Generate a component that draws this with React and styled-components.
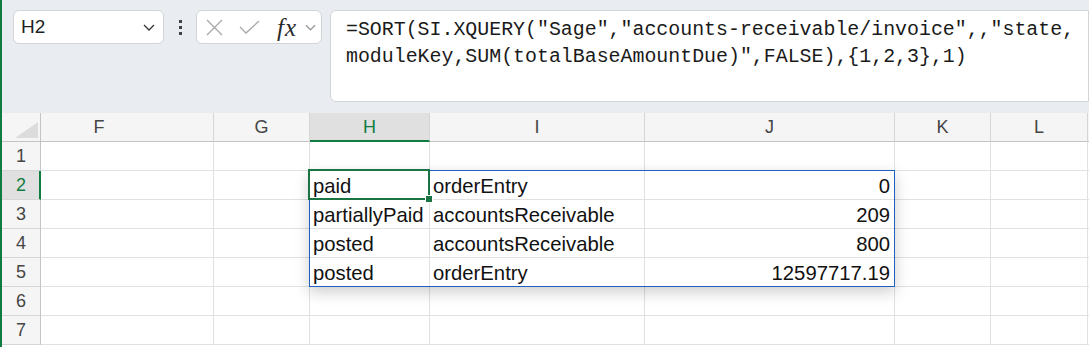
import styled, { createGlobalStyle } from "styled-components";

const GlobalStyle = createGlobalStyle`
  html, body {
    margin: 0;
    padding: 0;
    background: #fff;
    overflow: hidden;
  }
`;

const Frame = styled.div`
  width: 1089px;
  height: 347px;
  box-sizing: border-box;
  border-left: 2px solid #107c41;
  overflow: hidden;
  font-family: "Liberation Sans", Arial, sans-serif;
`;

const Toolbar = styled.div`
  height: 113px;
  box-sizing: border-box;
  background: #e9ecf0;
  display: flex;
  align-items: flex-start;
  padding: 10px 0 0 11px;
`;

const NameBox = styled.div`
  width: 151px;
  height: 34px;
  box-sizing: border-box;
  background: #fff;
  border: 1px solid #d2d4d7;
  border-radius: 6px;
  display: flex;
  align-items: center;
  justify-content: space-between;
  padding: 0 8px 0 7px;
  font-size: 19px;
  color: #1f1f1f;
`;

const Dots = styled.div`
  width: 32px;
  height: 34px;
  display: flex;
  flex-direction: column;
  align-items: center;
  justify-content: center;
  gap: 3px;

  span {
    width: 3px;
    height: 3px;
    background: #424242;
  }
`;

const FxBox = styled.div`
  width: 126px;
  height: 34px;
  box-sizing: border-box;
  background: #fff;
  border: 1px solid #d2d4d7;
  border-radius: 6px;
  display: flex;
  align-items: center;
  padding: 0 0 0 9px;
`;

const FxLabel = styled.span`
  font-family: "Liberation Serif", "Times New Roman", serif;
  font-style: italic;
  font-size: 25px;
  line-height: 25px;
  color: #2b2b2b;
  margin: 0 8px 0 17px;
  letter-spacing: 1px;
`;

const FormulaBar = styled.div`
  flex: 1;
  height: 92px;
  margin-left: 8px;
  box-sizing: border-box;
  background: #fff;
  border: 1px solid #d2d4d7;
  border-radius: 6px 0 0 6px;
  padding: 5px 0 0 15px;
  font-family: "Liberation Mono", "Courier New", monospace;
  font-size: 19.9px;
  line-height: 27px;
  color: #1a1a1a;
  white-space: pre;
`;

const Sheet = styled.div`
  position: relative;
  display: grid;
  grid-template-columns: 39px 173px 96px 120px 215px 250px 96px 97px 1fr;
  grid-auto-rows: 29px;
`;

const Corner = styled.div`
  background: #f5f5f5;
  border-right: 1px solid #c4c4c4;
  border-bottom: 1px solid #c4c4c4;
  display: flex;
  align-items: flex-end;
  justify-content: flex-end;
  padding: 0 2px 3px 0;
`;

const ColHead = styled.div`
  background: ${(p) => (p.$active ? "#e0e0e0" : "#f5f5f5")};
  color: ${(p) => (p.$active ? "#107c41" : "#454545")};
  border-right: 1px solid #d6d6d6;
  border-bottom: ${(p) => (p.$active ? "2px solid #107c41" : "1px solid #c4c4c4")};
  display: flex;
  align-items: center;
  justify-content: center;
  padding-right: ${(p) => p.$shift || 0}px;
  padding-top: ${(p) => (p.$active ? 1 : 0)}px;
  font-size: 18px;
`;

const RowHead = styled.div`
  background: ${(p) => (p.$active ? "#e0e0e0" : "#f5f5f5")};
  color: ${(p) => (p.$active ? "#107c41" : "#454545")};
  border-right: ${(p) => (p.$active ? "2px solid #107c41" : "1px solid #c4c4c4")};
  border-bottom: 1px solid #d6d6d6;
  display: flex;
  align-items: center;
  justify-content: center;
  padding-left: ${(p) => (p.$active ? 1 : 0)}px;
  font-size: 18px;
`;

const Cell = styled.div`
  border-right: 1px solid #e1e1e1;
  border-bottom: 1px solid #e1e1e1;
  display: flex;
  align-items: flex-end;
  justify-content: ${(p) => (p.$right ? "flex-end" : "flex-start")};
  padding: 0 4px 3px 3px;
  font-size: 20.3px;
  line-height: 20px;
  color: #111;
  white-space: nowrap;
  overflow: hidden;
`;

const SpillRange = styled.div`
  position: absolute;
  left: 307px;
  top: 57px;
  width: 586px;
  height: 117px;
  box-sizing: border-box;
  border: 1px solid #1f5fbf;
  box-shadow: 0 5px 14px rgba(0, 0, 0, 0.2);
  pointer-events: none;
`;

const Selection = styled.div`
  position: absolute;
  left: 306px;
  top: 56px;
  width: 122px;
  height: 31px;
  box-sizing: border-box;
  border: 2px solid #1a7343;
  pointer-events: none;
`;

const FillHandle = styled.div`
  position: absolute;
  right: -4px;
  bottom: -4px;
  width: 6px;
  height: 6px;
  background: #1a7343;
  outline: 1px solid #fff;
`;

const columns = [
  { name: "F", shift: 56 },
  { name: "G" },
  { name: "H", active: true },
  { name: "I" },
  { name: "J" },
  { name: "K" },
  { name: "L" },
];

const data = {
  2: ["paid", "orderEntry", "0"],
  3: ["partiallyPaid", "accountsReceivable", "209"],
  4: ["posted", "accountsReceivable", "800"],
  5: ["posted", "orderEntry", "12597717.19"],
};

function Chevron({ color = "#333", w = 12 }) {
  return (
    <svg width={w} height="7" viewBox="0 0 12 7">
      <polyline points="1,1 6,6 11,1" fill="none" stroke={color} strokeWidth="1.3" />
    </svg>
  );
}

function App() {
  const rows = [1, 2, 3, 4, 5, 6, 7];
  return (
    <Frame>
      <GlobalStyle />
      <Toolbar>
        <NameBox>
          <span>H2</span>
          <Chevron />
        </NameBox>
        <Dots>
          <span />
          <span />
          <span />
        </Dots>
        <FxBox>
          <svg width="17" height="17" viewBox="0 0 17 17">
            <path d="M1 1 L16 16 M16 1 L1 16" stroke="#a8a8a8" strokeWidth="1.3" fill="none" />
          </svg>
          <svg width="21" height="14" viewBox="0 0 21 14" style={{ marginLeft: 16 }}>
            <polyline points="1,7 7,13 20,1" fill="none" stroke="#a8a8a8" strokeWidth="1.3" />
          </svg>
          <FxLabel>fx</FxLabel>
          <Chevron color="#9a9a9a" w={11} />
        </FxBox>
        <FormulaBar>
          {'=SORT(SI.XQUERY("Sage","accounts-receivable/invoice",,"state,\nmoduleKey,SUM(totalBaseAmountDue)",FALSE),{1,2,3},1)'}
        </FormulaBar>
      </Toolbar>

      <Sheet>
        <Corner>
          <svg width="23" height="16" viewBox="0 0 23 16">
            <polygon points="23,0 23,16 0,16" fill="#dcdcdc" />
          </svg>
        </Corner>
        {columns.map((c) => (
          <ColHead key={c.name} $active={c.active} $shift={c.shift}>
            {c.name}
          </ColHead>
        ))}
        <ColHead />

        {rows.map((r) => {
          const vals = data[r] || ["", "", ""];
          return [
            <RowHead key={`h${r}`} $active={r === 2}>
              {r}
            </RowHead>,
            <Cell key={`f${r}`} />,
            <Cell key={`g${r}`} />,
            <Cell key={`hh${r}`}>{vals[0]}</Cell>,
            <Cell key={`i${r}`}>{vals[1]}</Cell>,
            <Cell key={`j${r}`} $right>
              {vals[2]}
            </Cell>,
            <Cell key={`k${r}`} />,
            <Cell key={`l${r}`} />,
            <Cell key={`z${r}`} />,
          ];
        })}

        <SpillRange />
        <Selection>
          <FillHandle />
        </Selection>
      </Sheet>
    </Frame>
  );
}

export default App;
